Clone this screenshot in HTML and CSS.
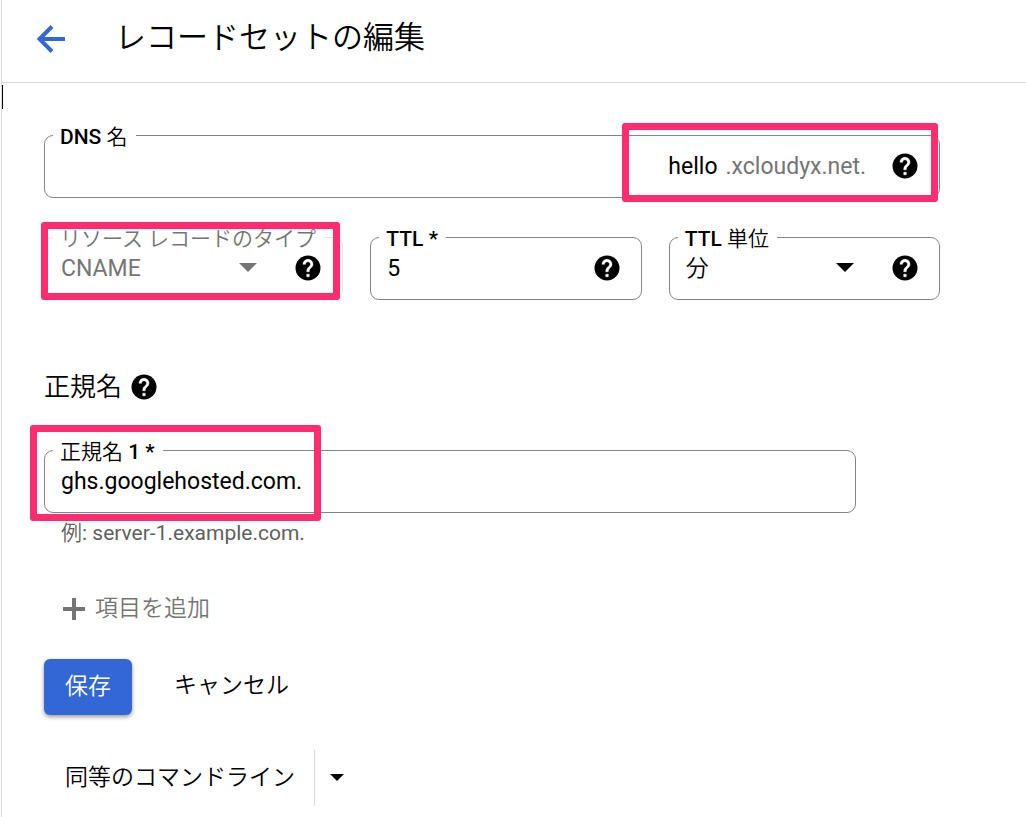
FILE: index.html
```html
<!DOCTYPE html>
<html lang="ja">
<head>
<meta charset="utf-8">
<title>レコードセットの編集</title>
<link rel="stylesheet" href="styles.css">
</head>
<body>
<svg class="defs" width="0" height="0" aria-hidden="true">
  <symbol id="help" viewBox="0 0 24 24"><circle cx="12" cy="12" r="10" fill="#000"/><path fill="#fff" stroke="#fff" stroke-width=".4" d="M13 19h-2v-2h2v2zm2.070-7.750-.9.920C13.450 12.900 13 13.500 13 15h-2v-.5c0-1.100.45-2.100 1.170-2.830l1.240-1.260c.37-.36.59-.86.59-1.410 0-1.100-.9-2-2-2s-2 .9-2 2H8c0-2.210 1.790-4 4-4s4 1.790 4 4c0 .88-.36 1.680-.93 2.250z"/></symbol>
  <symbol id="caret" viewBox="0 0 18 9"><path fill="currentColor" d="M0 0h18L9 9z"/></symbol>
</svg>
<div class="page">
  <header class="header">
    <button class="icon-button back" type="button" aria-label="戻る">
      <svg width="28" height="28" viewBox="0 0 28 28" fill="none" stroke="#3367d6" stroke-width="4"><path d="M28 14H3M15 1.500 2.500 14 15 26.500"/></svg>
    </button>
    <h1 class="title">レコードセットの編集</h1>
  </header>
  <main class="content">
    <div class="cursor"></div>
    <form class="form">
      <div class="field">
        <label class="label" for="dns">DNS <span class="light">名</span></label>
        <input class="control right" id="dns" type="text" value="hello">
        <span class="suffix">.xcloudyx.net.</span>
        <button class="icon-button" type="button" aria-label="ヘルプ"><svg class="help"><use href="#help"/></svg></button>
        <div class="mark mark-dns"></div>
      </div>
      <div class="row">
        <div class="field disabled">
          <label class="label light" for="type">リソース レコードのタイプ</label>
          <select class="control" id="type" disabled><option>CNAME</option></select>
          <svg class="caret"><use href="#caret"/></svg>
          <button class="icon-button" type="button" aria-label="ヘルプ"><svg class="help"><use href="#help"/></svg></button>
          <div class="mark mark-type"></div>
        </div>
        <div class="field">
          <label class="label" for="ttl">TTL *</label>
          <input class="control" id="ttl" type="text" value="5">
          <button class="icon-button" type="button" aria-label="ヘルプ"><svg class="help"><use href="#help"/></svg></button>
        </div>
        <div class="field">
          <label class="label" for="unit">TTL <span class="light">単位</span></label>
          <select class="control light" id="unit"><option>分</option></select>
          <svg class="caret"><use href="#caret"/></svg>
          <button class="icon-button" type="button" aria-label="ヘルプ"><svg class="help"><use href="#help"/></svg></button>
        </div>
      </div>
      <div class="section">
        <h2 class="section-title">正規名</h2>
        <button class="icon-button" type="button" aria-label="ヘルプ"><svg class="help"><use href="#help"/></svg></button>
      </div>
      <div class="canonical">
        <div class="field">
          <label class="label" for="cname"><span class="light">正規名</span> 1 *</label>
          <input class="control" id="cname" type="text" value="ghs.googlehosted.com.">
          <div class="mark mark-cname"></div>
        </div>
        <p class="hint"><span class="light">例</span>: server-1.example.com.</p>
      </div>
      <button class="add" type="button">
        <svg width="22" height="22" viewBox="0 0 22 22" fill="none" stroke="currentColor" stroke-width="4"><path d="M11 0v22M0 11h22"/></svg>
        項目を追加
      </button>
      <div class="actions">
        <button class="save" type="submit">保存</button>
        <button class="cancel" type="button">キャンセル</button>
      </div>
      <div class="split">
        <button class="command" type="button">同等のコマンドライン</button>
        <button class="more" type="button" aria-label="その他"><svg class="small-caret"><use href="#caret"/></svg></button>
      </div>
    </form>
  </main>
</div>
</body>
</html>
```
FILE: styles.css
```css
* { box-sizing: border-box; }
body {
  margin: 0;
  background: #fff;
  color: #000;
  font: 400 23px/32px Roboto, "Noto Sans CJK JP", sans-serif;
}
button, input, select { font: inherit; color: inherit; }
button { border: 0; padding: 0; background: none; cursor: pointer; }
h1, h2, p { margin: 0; }
.defs { position: absolute; }
.light { font-weight: 350; }
.page {
  min-height: 100vh;
  margin-left: 1px;
  border-left: 1px solid #dadada;
}
.header {
  display: flex;
  align-items: center;
  gap: 50px;
  height: 83px;
  padding: 0 35px 5px;
  border-bottom: 1px solid #dadada;
}
.title { padding-bottom: 2px; font-size: 31px; line-height: 44px; font-weight: 350; }
.icon-button { display: flex; flex: none; }
.help { width: 30px; height: 30px; }
.content { padding-top: 2px; }
.cursor { width: 1px; height: 24px; background: #000; }
.form { display: flex; flex-direction: column; padding: 26px 86px 0 42px; }
.field {
  position: relative;
  display: flex;
  align-items: center;
  min-width: 0;
  height: 63px;
  padding: 0 19px 2px 16px;
  border: 1px solid #80868b;
  border-radius: 9px;
}
.label {
  position: absolute;
  left: 8px;
  top: -13px;
  padding: 0 8px 0 7px;
  background: #fff;
  font-size: 21px;
  line-height: 28px;
  font-weight: 500;
  white-space: nowrap;
}
.label.light, .label .light { font-weight: 350; }
.control {
  flex: 1;
  min-width: 0;
  height: 34px;
  padding: 2px 0 0;
  border: 0;
  outline: 0;
  background: transparent;
  appearance: none;
  opacity: 1;
}
.right { text-align: right; }
.suffix { margin: 0 24px 0 8px; padding-top: 2px; color: #757575; }
.disabled { border-color: #e4e4e4; }
.disabled .label, .disabled .control, .disabled .caret { color: #757575; }
.caret { flex: none; width: 18px; height: 9px; margin-right: 36px; }
.row {
  display: grid;
  grid-template-columns: 299fr 271fr 271fr;
  gap: 27px;
  margin-top: 39px;
}
.mark {
  position: absolute;
  border: 7px solid #ff2d6f;
  border-radius: 3px;
  pointer-events: none;
}
.mark-dns { top: -13px; right: 1px; width: 316px; height: 79px; }
.mark-type { top: -16px; left: -4px; right: 2px; height: 78px; }
.mark-cname { top: -26px; left: -15px; width: 291px; height: 96px; }
.section { display: flex; align-items: center; gap: 7px; margin-top: 68px; }
.section-title { font-size: 26px; line-height: 38px; font-weight: 350; }
.canonical { margin: 44px 84px 0 0; }
.hint { margin-top: 6px; padding-left: 17px; color: #5f5f5f; font-size: 21px; line-height: 28px; }
.add {
  display: flex;
  align-items: center;
  align-self: flex-start;
  gap: 10px;
  margin: 46px 0 0 19px;
  color: #757575;
  font-weight: 350;
}
.actions { display: flex; gap: 42px; margin-top: 34px; }
.save, .cancel, .command { font-weight: 350; }
.save {
  height: 56px;
  padding: 0 21px;
  border-radius: 6px;
  background: #3367d6;
  color: #fff;
  box-shadow: 0 2px 4px rgba(0, 0, 0, .4);
}
.cancel { padding-bottom: 2px; }
.split { display: flex; height: 56px; margin-top: 35px; }
.command { padding: 0 19px 0 21px; }
.more { display: flex; align-items: center; padding: 0 15px 2px; border-left: 1px solid #dadada; }
.small-caret { width: 14px; height: 7px; }
```
